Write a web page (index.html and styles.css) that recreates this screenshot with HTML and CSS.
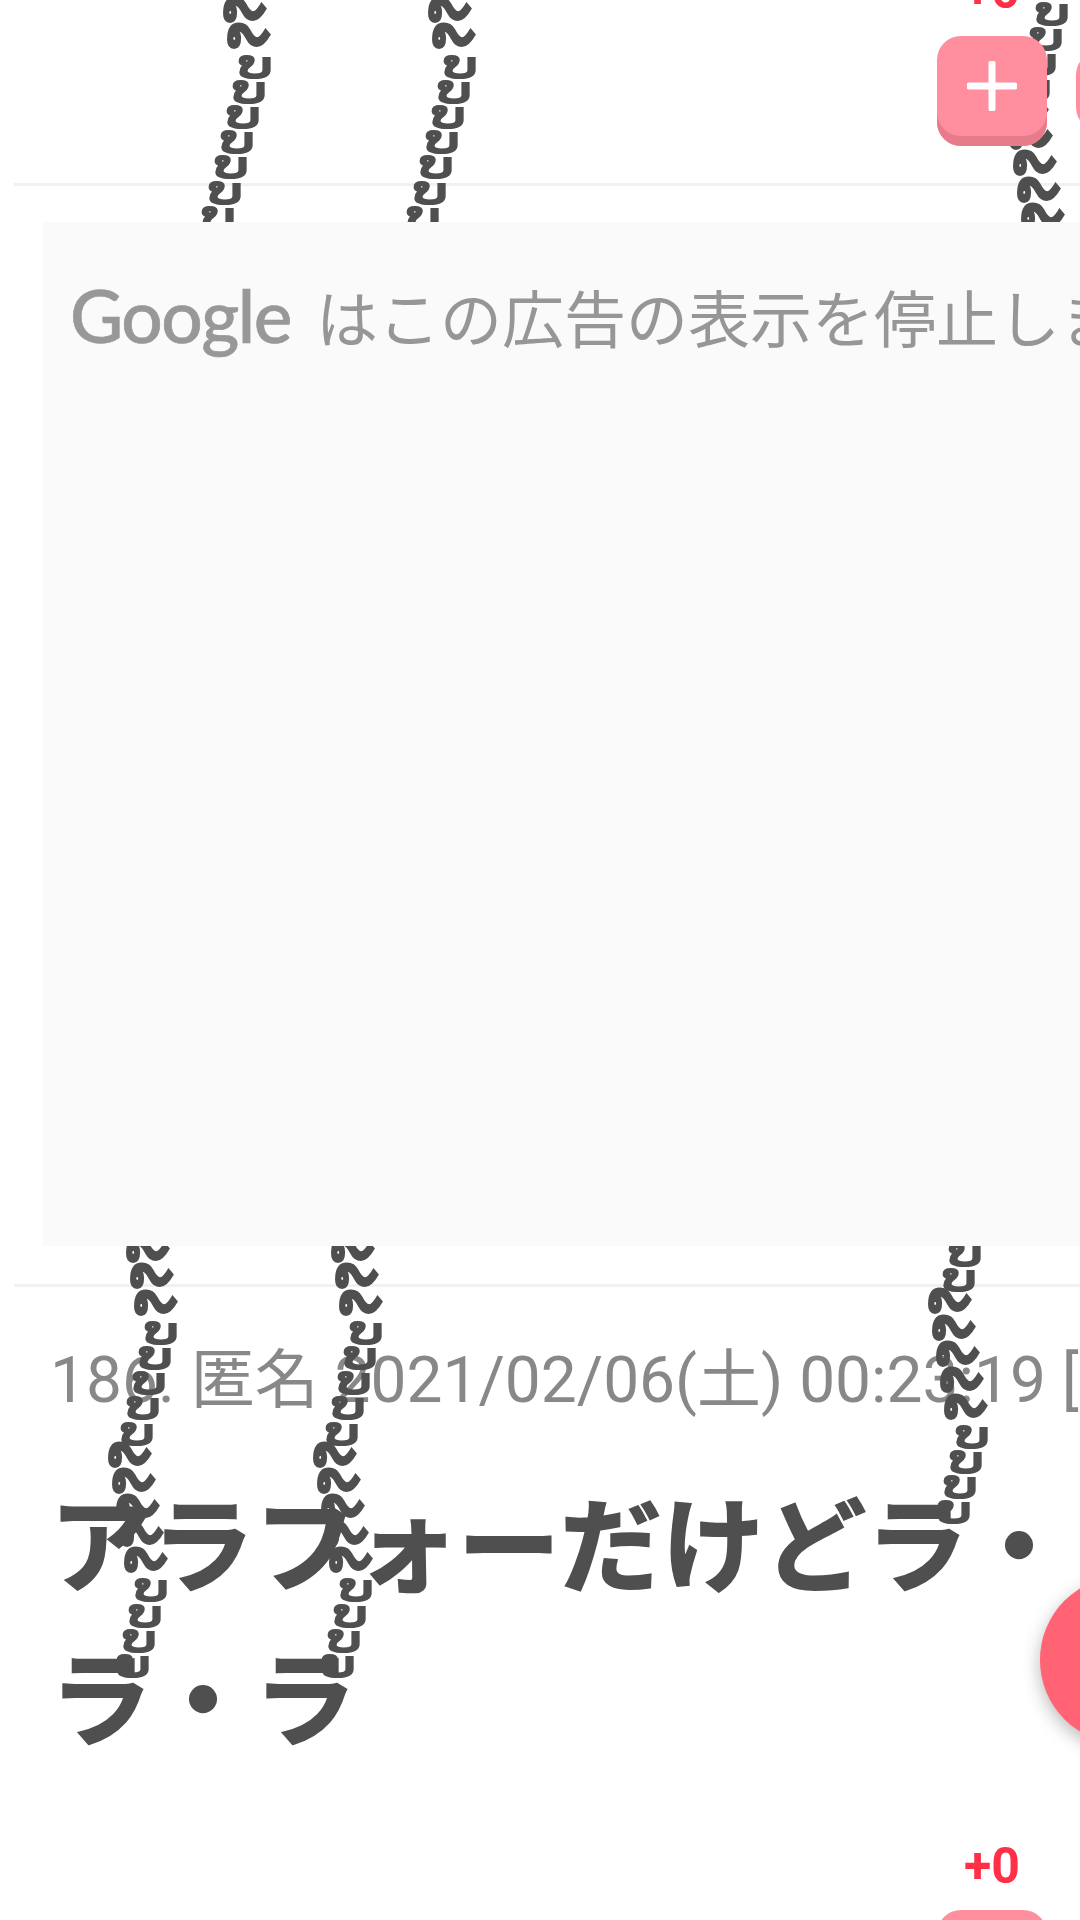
FILE: index.html
```html
<!doctype html>
<html lang="ja">
<head>
<meta charset="utf-8">
<title>スレッド</title>
<link rel="stylesheet" href="styles.css">
</head>
<body>
<div class="page">
  <section class="vote-foot">
    <div class="score score-top">+0</div>
    <div class="vote-row">
      <div class="vote-btn">
        <svg class="plus" viewBox="0 0 50 50" aria-hidden="true"><path d="M2.5 25h45M25 2.5v45"/></svg>
      </div>
      <div class="vote-next"></div>
    </div>
  </section>
  <hr class="rule">
  <aside class="ad">
    <span class="ad-logo">Google</span>
    <span class="ad-text">はこの広告の表示を停止しました</span>
  </aside>
  <hr class="rule rule-low">
  <article class="post">
    <p class="meta">186. 匿名 2021/02/06(土) 00:23:19 [</p>
    <h2 class="title">アラフォーだけどラ・ラ・ラ</h2>
    <div class="score score-bottom">+0</div>
    <div class="vote-btn vote-cut"></div>
  </article>

  <div class="stack s-a" aria-hidden="true">
    <div class="run run-k"><span>&nbsp;ຼ</span><span>&nbsp;ຼ</span></div>
    <div class="run run-y r1"><span>&nbsp;ູ</span><span>&nbsp;ູ</span><span>&nbsp;ູ</span><span>&nbsp;ູ</span><span>&nbsp;ູ</span><span>&nbsp;ູ</span><span>&nbsp;ູ</span></div>
  </div>
  <div class="stack s-b" aria-hidden="true">
    <div class="run run-k"><span>&nbsp;ຼ</span><span>&nbsp;ຼ</span></div>
    <div class="run run-y r1"><span>&nbsp;ູ</span><span>&nbsp;ູ</span><span>&nbsp;ູ</span><span>&nbsp;ູ</span><span>&nbsp;ູ</span><span>&nbsp;ູ</span><span>&nbsp;ູ</span></div>
  </div>
  <div class="stack s-c" aria-hidden="true">
    <div class="run run-y"><span>&nbsp;ູ</span><span>&nbsp;ູ</span><span>&nbsp;ູ</span><span>&nbsp;ູ</span></div>
    <div class="run run-k r2"><span>&nbsp;ຼ</span><span>&nbsp;ຼ</span><span>&nbsp;ຼ</span><span>&nbsp;ຼ</span><span>&nbsp;ຼ</span></div>
  </div>
  <div class="stack s-d" aria-hidden="true">
    <div class="run run-k"><span>&nbsp;ຼ</span><span>&nbsp;ຼ</span><span>&nbsp;ຼ</span></div>
    <div class="run run-y r3"><span>&nbsp;ູ</span><span>&nbsp;ູ</span><span>&nbsp;ູ</span><span>&nbsp;ູ</span><span>&nbsp;ູ</span></div>
    <div class="run run-k r4"><span>&nbsp;ຼ</span><span>&nbsp;ຼ</span><span>&nbsp;ຼ</span><span>&nbsp;ຼ</span><span>&nbsp;ຼ</span></div>
    <div class="run run-y r5"><span>&nbsp;ູ</span><span>&nbsp;ູ</span><span>&nbsp;ູ</span><span>&nbsp;ູ</span></div>
  </div>
  <div class="stack s-e" aria-hidden="true">
    <div class="run run-k"><span>&nbsp;ຼ</span><span>&nbsp;ຼ</span><span>&nbsp;ຼ</span></div>
    <div class="run run-y r3"><span>&nbsp;ູ</span><span>&nbsp;ູ</span><span>&nbsp;ູ</span><span>&nbsp;ູ</span><span>&nbsp;ູ</span></div>
    <div class="run run-k r4"><span>&nbsp;ຼ</span><span>&nbsp;ຼ</span><span>&nbsp;ຼ</span><span>&nbsp;ຼ</span><span>&nbsp;ຼ</span></div>
    <div class="run run-y r5"><span>&nbsp;ູ</span><span>&nbsp;ູ</span><span>&nbsp;ູ</span><span>&nbsp;ູ</span></div>
  </div>
  <div class="stack s-f" aria-hidden="true">
    <div class="run run-y"><span>&nbsp;ູ</span><span>&nbsp;ູ</span></div>
    <div class="run run-k r6"><span>&nbsp;ຼ</span><span>&nbsp;ຼ</span><span>&nbsp;ຼ</span><span>&nbsp;ຼ</span><span>&nbsp;ຼ</span></div>
    <div class="run run-y r7"><span>&nbsp;ູ</span><span>&nbsp;ູ</span><span>&nbsp;ູ</span><span>&nbsp;ູ</span></div>
  </div>

  <div class="fab"></div>
</div>
</body>
</html>
```
FILE: styles.css
```css
* { box-sizing: border-box; }
html, body { margin: 0; padding: 0; background: #fff; }
.page {
  position: relative;
  width: 1080px;
  height: 1920px;
  overflow: hidden;
  font-family: "Roboto", "Noto Sans CJK JP", sans-serif;
  color: #4f4f4f;
}

/* vote footer */
.vote-foot { display: flow-root; height: 183px; padding-left: 937px; }
.score {
  width: 110px;
  text-align: center;
  font: 700 50px/54px "Roboto", sans-serif;
  color: #ff2f48;
}
.score-top { height: 54px; margin-top: -18px; line-height: 18px; }
.vote-row { display: flex; gap: 29px; }
.vote-btn {
  position: relative;
  z-index: 2;
  flex: none;
  width: 110px;
  height: 110px;
  padding-bottom: 10px;
  display: flex;
  align-items: center;
  justify-content: center;
  background: #ff8e9e;
  border-radius: 24px;
  box-shadow: inset 0 -10px 0 #e87b8a;
}
.vote-next {
  flex: none;
  width: 110px;
  height: 80px;
  margin-top: 15px;
  background: #ff8e9e;
  border-radius: 24px;
}
.plus { width: 50px; height: 50px; }
.plus path { fill: none; stroke: #fff; stroke-width: 7; stroke-linecap: round; }

/* rules */
.rule { margin: 0 0 0 14px; border: 0; height: 3px; background: #f1f1f1; }
.rule-low { margin-top: 38px; }

/* ad */
.ad {
  position: relative;
  z-index: 2;
  height: 1024px;
  margin: 36px 0 0 43px;
  padding: 48px 0 0 27px;
  background: #fafafa;
  color: #969696;
  white-space: nowrap;
  overflow: hidden;
  display: flex;
  align-items: baseline;
  gap: 25px;
}
.ad-logo {
  font: 500 73px/90px "Lato", sans-serif;
  color: #989898;
  letter-spacing: -1.5px;
  -webkit-text-stroke: 0.6px #989898;
}
.ad-text { font: 400 62px/90px "Noto Sans CJK JP", sans-serif; }

/* post */
.post { padding: 52px 0 0 50px; }
.meta {
  margin: 0;
  white-space: nowrap;
  font: 400 64px/84px "Roboto", "Noto Sans CJK JP", sans-serif;
  color: #888;
}
.title {
  margin: 40px 0 0;
  font: 700 102px/154px "Noto Sans CJK JP", sans-serif;
  -webkit-text-stroke: 2px #4f4f4f;
  color: #4f4f4f;
}
.score-bottom { margin: 68px 0 0 887px; height: 54px; }
.vote-cut { margin: 17px 0 0 887px; }

/* runaway combining-mark columns */
.stack {
  position: absolute;
  z-index: 1;
  display: flex;
  flex-direction: column;
  font: 700 63px/26px "DejaVu Sans", sans-serif;
  color: #4f4f4f;
  white-space: nowrap;
}
.run span { display: block; }
.run-k span {
  height: 26.3px;
  transform: scaleY(1.6);
  transform-origin: 0 35px;
}
.run-y span {
  height: 25.2px;
  font-size: 83px;
  transform: scaleX(1.29);
  transform-origin: 0 0;
}
.run-k span:nth-child(2) { margin-left: 4px; }
.run-k span:nth-child(3) { margin-left: 8px; }
.run-k span:nth-child(4) { margin-left: 12px; }
.run-k span:nth-child(5) { margin-left: 16px; }
.run-y span:nth-child(2) { margin-left: -6px; }
.run-y span:nth-child(3) { margin-left: -12px; }
.run-y span:nth-child(4) { margin-left: -18px; }
.run-y span:nth-child(5) { margin-left: -24px; }
.run-y span:nth-child(6) { margin-left: -30px; }
.run-y span:nth-child(7) { margin-left: -37px; }

.r1 { margin-left: 8.3px; }
.r2 { margin-left: -23.3px; }
.r3 { margin-left: 11.3px; }
.r4 { margin-left: -18px; }
.r5 { margin-left: 1.3px; }
.r6 { margin-left: -13.3px; }
.r7 { margin-left: 7px; }

.s-a { left: 244px; top: -42px; }
.s-b { left: 449px; top: -42px; }
.s-c { left: 1049.3px; top: -42px; }
.s-d { left: 147px; top: 1198px; }
.s-e { left: 352px; top: 1198px; }
.s-f { left: 962.3px; top: 1199px; }

.fab {
  position: absolute;
  z-index: 3;
  left: 1040px;
  top: 1576px;
  width: 168px;
  height: 168px;
  border-radius: 50%;
  background: #ff6374;
  box-shadow: 0 6px 18px rgba(0,0,0,.28);
}
```
